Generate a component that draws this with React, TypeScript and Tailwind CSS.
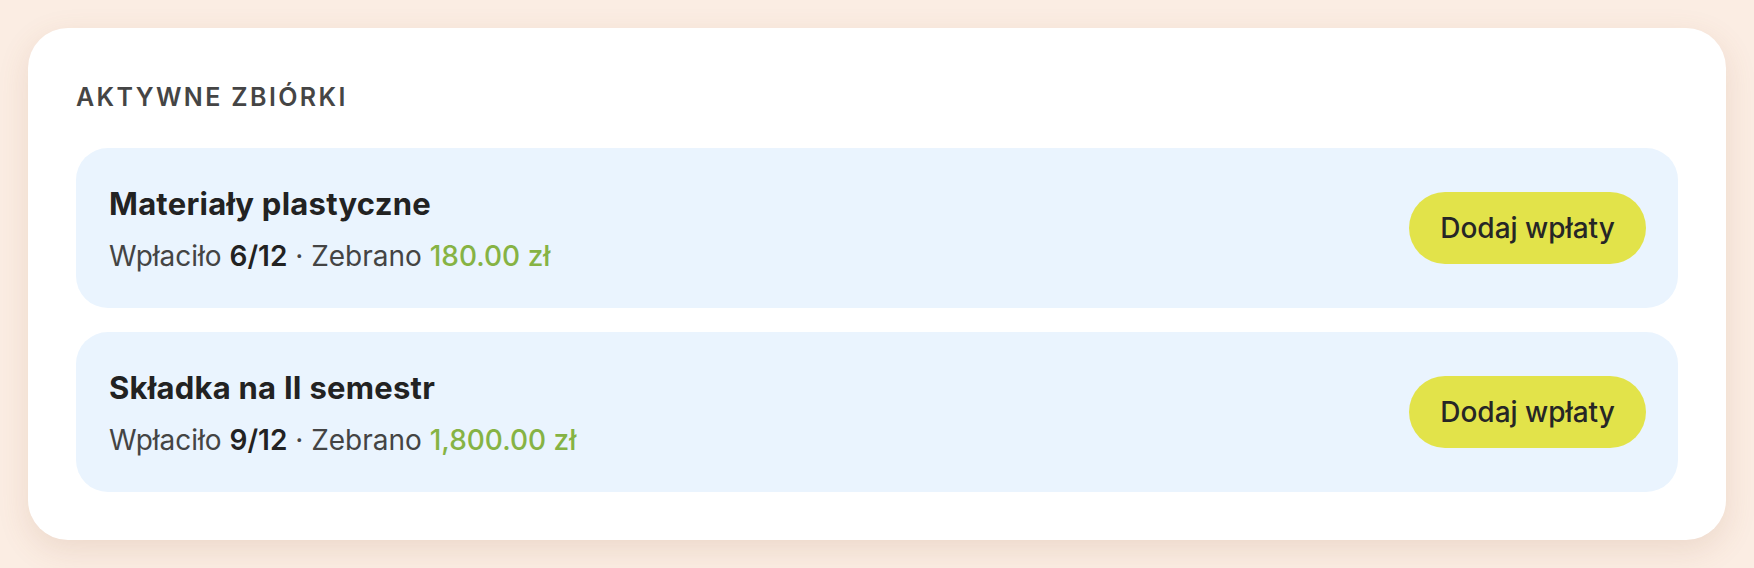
import React from "react";

type Collection = {
  name: string;
  paid: string;
  amount: string;
};

const collections: Collection[] = [
  { name: "Materiały plastyczne", paid: "6/12", amount: "180.00 zł" },
  { name: "Składka na II semestr", paid: "9/12", amount: "1,800.00 zł" },
];

function CollectionRow({ item }: { item: Collection }) {
  return (
    <div className="flex h-[160px] items-center justify-between rounded-[32px] bg-[#EAF4FE] pl-[33px] pr-8">
      <div className="flex flex-col pt-[4px]">
        <div className="text-[31px] font-bold leading-[36px] tracking-[0.008em] text-[#222222]">
          {item.name}
        </div>
        <div className="mt-4 text-[28px] leading-[36px] text-[#444444]">
          Wpłaciło <span className="font-semibold text-[#222222]">{item.paid}</span>
          {" · "}Zebrano{" "}
          <span className="font-medium text-[#86B344]">{item.amount}</span>
        </div>
      </div>
      <button className="flex h-[72px] w-[237px] items-center justify-center rounded-full bg-[#E2E34A] text-[28px] font-medium text-[#262626]">
        Dodaj wpłaty
      </button>
    </div>
  );
}

export default function App() {
  return (
    <div
      className="min-h-[568px] w-full bg-[#FBEDE3] p-7"
      style={{ fontFamily: "Inter, 'Noto Sans', sans-serif" }}
    >
      <div className="rounded-[40px] bg-white p-12 shadow-[0_10px_32px_rgba(150,95,55,0.14)]">
        <h2 className="mb-[30px] text-[25px] font-semibold uppercase leading-[42px] tracking-[0.095em] text-[#454545]">
          Aktywne zbiórki
        </h2>
        <div className="flex flex-col gap-6">
          {collections.map((c) => (
            <CollectionRow key={c.name} item={c} />
          ))}
        </div>
      </div>
    </div>
  );
}
